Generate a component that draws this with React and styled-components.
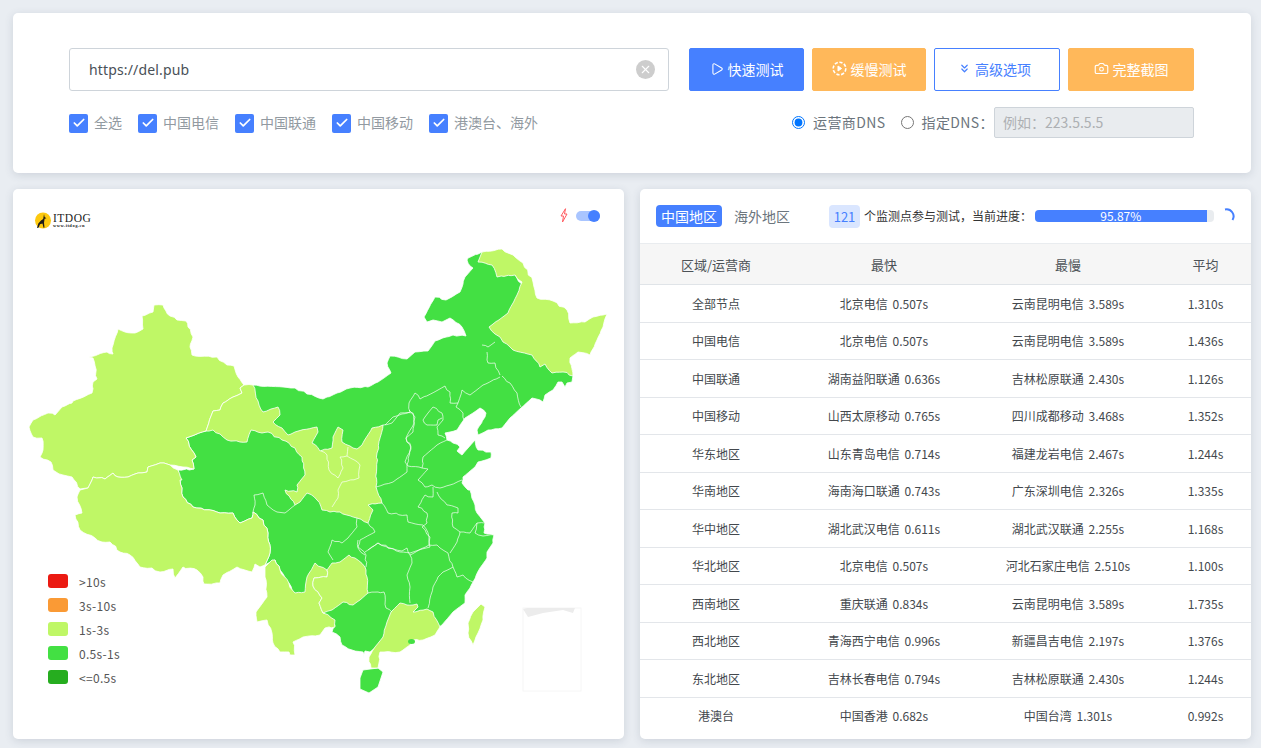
import React from "react";
import styled, { createGlobalStyle } from "styled-components";
import { Play, ChevronsDown, Camera, X, Check } from "lucide-react";

const GlobalStyle = createGlobalStyle`
  html, body {
    margin: 0;
    height: 100%;
    overflow: hidden;
    background: #e9edf2;
    font-family: "Noto Sans CJK SC", "Noto Sans", sans-serif;
  }
`;

const BLUE = "#4680ff";
const ORANGE = "#ffb85a";
const DARK = "#43e043";
const LIGHT = "#bff766";

const Page = styled.div`
  box-sizing: border-box;
  width: 1261px;
  height: 748px;
  padding: 13px 10px 9px 13px;
  display: flex;
  flex-direction: column;
  gap: 16px;
`;

const Card = styled.section`
  background: #fff;
  border-radius: 5px;
  box-shadow: 0 2px 9px rgba(60, 75, 100, 0.16);
`;

const SearchCard = styled(Card)`
  box-sizing: border-box;
  height: 160px;
  padding: 35px 57px 0 56px;
  display: flex;
  flex-direction: column;
  gap: 16px;
`;

const Row = styled.div`
  display: flex;
  align-items: center;
  justify-content: space-between;
`;

const UrlBox = styled.div`
  position: relative;
  width: 600px;
  height: 43px;
`;

const UrlInput = styled.input`
  box-sizing: border-box;
  width: 100%;
  height: 100%;
  padding: 0 40px 0 19px;
  border: 1px solid #ced4da;
  border-radius: 3px;
  outline: none;
  font: 14px "Noto Sans", "Noto Sans CJK SC", sans-serif;
  letter-spacing: 0.15px;
  color: #495057;
`;

const ClearIcon = styled.span`
  position: absolute;
  top: 12px;
  right: 14px;
  width: 19px;
  height: 19px;
  border-radius: 50%;
  background: #cdcdcd;
  color: #fff;
  display: flex;
  align-items: center;
  justify-content: center;
`;

const Buttons = styled.div`
  display: flex;
  gap: 8px;
`;

const Button = styled.button`
  box-sizing: border-box;
  width: ${(p) => p.$width}px;
  height: 43px;
  padding: 0 ${(p) => p.$shift || 0}px 2px 0;
  display: flex;
  align-items: center;
  justify-content: center;
  gap: ${(p) => p.$gap || 4}px;
  border-radius: 2px;
  border: 1px solid ${(p) => (p.$kind === "orange" ? ORANGE : BLUE)};
  background: ${(p) =>
    p.$kind === "orange" ? ORANGE : p.$kind === "outline" ? "#fff" : BLUE};
  color: ${(p) => (p.$kind === "outline" ? BLUE : "#fff")};
  font: 14px "Noto Sans CJK SC", sans-serif;
`;

const Checks = styled.div`
  display: flex;
  gap: 16px;
`;

const CheckItem = styled.label`
  display: flex;
  align-items: center;
  gap: 6px;
  font-size: 14px;
  color: #929aa1;
`;

const CheckLabel = styled.span`
  padding-bottom: 2px;
`;

const CheckBox = styled.span`
  width: 19px;
  height: 19px;
  margin-top: 1px;
  border-radius: 2px;
  background: ${BLUE};
  color: #fff;
  display: flex;
  align-items: center;
  justify-content: center;
`;

const DnsGroup = styled.div`
  display: flex;
  align-items: center;
  font-size: 14px;
  color: #6c757d;
`;

const RadioItem = styled.label`
  display: flex;
  align-items: center;
  gap: 8px;
  margin-right: ${(p) => p.$gap}px;
  letter-spacing: 0.4px;
`;

const RadioLabel = styled.span`
  padding-bottom: 1px;
`;

const Radio = styled.input`
  margin: 0;
  width: 13px;
  height: 13px;
`;

const DnsInput = styled.input`
  box-sizing: border-box;
  width: 200px;
  height: 31px;
  padding: 0 8px 1px;
  border: 1px solid #ced4da;
  border-radius: 2px;
  background: #e9ecef;
  font: 14px "Noto Sans CJK SC", sans-serif;
  &::placeholder {
    color: #adb0b3;
  }
`;

const Panels = styled.div`
  display: grid;
  grid-template-columns: 611px 611px;
  gap: 16px;
  flex: 1;
  min-height: 0;
`;

const MapCard = styled(Card)`
  position: relative;
  overflow: hidden;
`;

const MapCanvas = styled.svg`
  position: absolute;
  inset: 0;
`;

const MapHead = styled.div`
  position: relative;
  display: flex;
  justify-content: space-between;
  align-items: flex-start;
  padding: 19px 24px 0 21px;
`;

const Logo = styled.div`
  display: flex;
  align-items: center;
  gap: 1px;
  margin-top: 4px;
`;

const LogoText = styled.div`
  display: flex;
  flex-direction: column;
  font-family: "Liberation Serif", serif;
  color: #222;
`;

const LogoName = styled.span`
  font-size: 11.5px;
  line-height: 10px;
  letter-spacing: 0.5px;
`;

const LogoUrl = styled.span`
  font-size: 4.5px;
  line-height: 5px;
  letter-spacing: 0.5px;
  font-weight: 700;
`;

const Switch = styled.div`
  display: flex;
  align-items: center;
  gap: 8px;
`;

const Track = styled.div`
  position: relative;
  width: 24px;
  height: 10px;
  border-radius: 5px;
  background: #a9c5ff;
`;

const Thumb = styled.span`
  position: absolute;
  top: -1px;
  right: 0;
  width: 12px;
  height: 12px;
  border-radius: 50%;
  background: ${BLUE};
`;

const Legend = styled.ul`
  position: absolute;
  left: 35px;
  top: 382px;
  margin: 0;
  padding: 0;
  list-style: none;
  display: flex;
  flex-direction: column;
  gap: 4px;
`;

const LegendItem = styled.li`
  display: flex;
  align-items: center;
  gap: 11px;
  height: 20px;
  font-size: 12px;
  letter-spacing: 0.3px;
  color: #555;
`;

const Swatch = styled.span`
  width: 20px;
  height: 14px;
  border-radius: 3px;
  background: ${(p) => p.$color};
`;

const ResultCard = styled(Card)`
  overflow: hidden;
  display: flex;
  flex-direction: column;
`;

const ResultHead = styled.div`
  box-sizing: border-box;
  height: 54px;
  padding: 16px 16px 0;
  display: flex;
  align-items: flex-start;
`;

const Tab = styled.span`
  box-sizing: border-box;
  height: 22px;
  margin-right: 12px;
  border-radius: 4px;
  font-size: 14px;
  line-height: 22px;
  text-align: center;
  color: ${(p) => (p.$active ? "#fff" : "#6c757d")};
  background: ${(p) => (p.$active ? BLUE : "transparent")};
  width: ${(p) => (p.$active ? "66px" : "56px")};
`;

const Count = styled.span`
  width: 31px;
  height: 23px;
  margin: 0 4px 0 27px;
  border-radius: 4px;
  background: #dae6ff;
  color: ${BLUE};
  font-size: 13px;
  line-height: 23px;
  text-align: center;
`;

const CountText = styled.span`
  width: 171px;
  font-size: 12px;
  line-height: 22px;
  color: #333;
`;

const Progress = styled.div`
  width: 179px;
  height: 12px;
  margin-top: 5px;
  border-radius: 4px;
  background: #e9ecef;
`;

const ProgressBar = styled.div`
  height: 100%;
  border-radius: 4px 0 0 4px;
  background: ${BLUE};
  color: #fff;
  font-size: 12px;
  line-height: 12px;
  text-align: center;
`;

const Spinner = styled.svg`
  margin: 3px 0 0 9px;
`;

const Table = styled.table`
  width: 100%;
  border-collapse: collapse;
  table-layout: fixed;
`;

const HeadCell = styled.th`
  height: 40px;
  padding: 0;
  background: #f6f6f6;
  border-top: 1px solid #e9ecef;
  border-bottom: 1px solid #e0e4e8;
  font-size: 13px;
  font-weight: 400;
  color: #4c5257;
`;

const Cell = styled.td`
  height: 36.5px;
  padding: 0;
  border-bottom: 1px solid #e3e6ea;
  font-size: 12px;
  word-spacing: 2px;
  text-align: center;
  color: #43484d;
  tr:last-child > & {
    border-bottom: 0;
  }
`;

const CHECKS = ["全选", "中国电信", "中国联通", "中国移动", "港澳台、海外"];

const LEGEND = [
  ["#eb1a12", ">10s"],
  ["#fa9a35", "3s-10s"],
  [LIGHT, "1s-3s"],
  [DARK, "0.5s-1s"],
  ["#26ad1f", "<=0.5s"],
];

const ROWS = [
  ["全部节点", "北京电信 0.507s", "云南昆明电信 3.589s", "1.310s"],
  ["中国电信", "北京电信 0.507s", "云南昆明电信 3.589s", "1.436s"],
  ["中国联通", "湖南益阳联通 0.636s", "吉林松原联通 2.430s", "1.126s"],
  ["中国移动", "山西太原移动 0.765s", "四川成都移动 3.468s", "1.352s"],
  ["华东地区", "山东青岛电信 0.714s", "福建龙岩电信 2.467s", "1.244s"],
  ["华南地区", "海南海口联通 0.743s", "广东深圳电信 2.326s", "1.335s"],
  ["华中地区", "湖北武汉电信 0.611s", "湖北武汉联通 2.255s", "1.168s"],
  ["华北地区", "北京电信 0.507s", "河北石家庄电信 2.510s", "1.100s"],
  ["西南地区", "重庆联通 0.834s", "云南昆明电信 3.589s", "1.735s"],
  ["西北地区", "青海西宁电信 0.996s", "新疆昌吉电信 2.197s", "1.376s"],
  ["东北地区", "吉林长春电信 0.794s", "吉林松原联通 2.430s", "1.244s"],
  ["港澳台", "中国香港 0.682s", "中国台湾 1.301s", "0.992s"],
];

// the real borders are jagged: split each edge and nudge the new points.
// the nudge depends only on the position, so shared edges stay together
const roughen = (points) => {
  const pts = points.split(" ").map((p) => p.split(",").map(Number));
  const out = [];
  pts.forEach(([x, y], i) => {
    out.push(`${x},${y}`);
    const next = pts[i + 1];
    if (!next) return;
    const steps = Math.round(Math.hypot(next[0] - x, next[1] - y) / 4);
    for (let k = 1; k < steps; k++) {
      const px = x + ((next[0] - x) * k) / steps;
      const py = y + ((next[1] - y) * k) / steps;
      const seed = Math.sin(Math.round(px * 10) * 12.9898 + Math.round(py * 10) * 78.233) * 43758.5453;
      const n = seed - Math.floor(seed) - 0.5;
      out.push(`${(px + n * 1.6).toFixed(1)},${(py - n * 1.6).toFixed(1)}`);
    }
  });
  return out.join(" ");
};

// map outlines, in page pixels (the svg viewBox starts at the card corner)
const MAINLAND = roughen(
  "468,258 482,252 500,255 540,310 570,345 570,358 573,376 572,382 567,383 565,387 562,382 558,382 553,390 545,395 543,402 532,398 521,408 510,418 502,428 488,430 478,435 477,430 485,417 486,413 480,408 473,413 465,418 457,430 450,432 445,433 447,440 453,443 460,447 457,451 462,455 468,448 475,440 478,450 491,452 491,458 478,462 475,467 463,477 462,483 468,490 470,490 475,505 477,513 485,523 484,533 494,535 493,543 487,552 487,558 480,568 473,582 470,588 465,595 465,603 453,612 442,625 425,635 385,640 370,652 365,651 364,658 363,652 352,650 342,645 340,637 332,632 335,625 325,615 310,598 295,594 280,570 275,560 265,565 270,553 268,533 263,520 253,512 252,518 240,523 233,513 220,513 193,507 183,497 180,480 178,470 194,469 192,460 196,457 186,438 206,431 230,410 253,385 283,387 295,388 307,394 323,399 337,393 350,388 368,387 378,382 391,373 387,363 390,356 407,359 415,352 428,351 435,341 453,335 466,336 462,327 450,318 442,322 433,320 427,322 424,317 435,297 446,300 460,292 465,277 473,268 467,260"
);

const HAINAN = "363,670 378,668 383,672 378,687 369,693 360,689 360,678";

const LIGHT_AREAS = [
  // xinjiang
  "154,305 163,305 164,308 170,316 177,320 186,321 188,327 193,337 190,347 192,355 217,357 227,365 234,366 238,377 244,385 240,388 242,393 233,397 223,403 220,410 213,411 206,431 186,438 196,457 192,460 194,469 183,467 170,465 160,463 148,467 147,472 138,473 128,477 118,477 113,473 105,479 93,477 88,488 80,489 72,477 63,475 53,470 51,462 40,457 43,450 42,438 33,437 29,427 33,420 48,413 55,415 62,407 72,403 73,401 92,393 93,382 97,379 93,358 89,357 107,352 113,354 112,348 118,329 125,332 135,333 143,329 142,316 153,312",
  // tibet
  "88,488 93,477 105,479 113,473 118,477 128,477 138,473 147,472 148,467 160,463 170,465 178,470 182,480 180,480 183,497 193,507 220,513 233,513 240,523 252,518 253,512 263,520 268,533 270,553 265,565 260,567 255,564 252,572 237,567 223,575 220,583 204,584 203,577 197,570 183,567 175,578 173,569 160,572 152,568 140,567 130,555 120,552 110,542 102,542 80,530 75,515 82,513 77,497 80,490",
  // yunnan
  "265,567 272,560 275,560 280,570 295,593 305,592 307,577 315,563 327,570 327,577 314,578 313,586 322,598 319,603 323,613 335,620 335,627 325,628 320,635 303,637 293,642 295,655 290,655 289,652 280,652 273,643 272,633 267,620 257,622 256,612 267,597 265,577",
  // guizhou
  "332,563 340,562 349,555 355,558 365,567 367,577 368,593 360,600 353,605 343,602 332,610 323,613 319,603 322,598 313,586 314,578 327,577 327,570",
  // gansu, ningxia, shaanxi
  "244,385 253,385 258,401 263,412 278,407 280,415 273,422 282,428 288,435 295,432 317,427 318,432 312,443 320,451 332,448 333,437 338,427 343,430 342,442 350,446 357,449 362,445 372,428 383,425 377,453 376,487 382,503 368,505 373,510 368,523 357,518 340,512 330,512 322,510 317,500 307,493 300,502 295,505 285,490 297,492 297,485 305,475 302,457 295,448 282,440 268,432 262,433 251,430 247,442 240,442 227,440 220,434 213,430 206,431 213,411 220,410 223,403 233,397 242,393 240,388",
  // guangdong
  "391,612 400,603 407,605 417,604 418,607 413,612 427,609 433,612 440,627 435,635 423,640 413,640 410,645 400,652 380,652 378,668 371,668 369,657 375,647 383,637 387,622",
  // taiwan
  "481,604 485,607 483,620 478,633 475,640 473,645 468,633 468,623 473,612",
  // heilongjiang
  "482,252 502,249 513,255 523,263 533,282 537,298 553,301 567,310 570,323 585,322 593,317 607,314 603,327 597,340 590,355 578,352 570,358 573,376 563,372 552,373 545,364 540,367 532,355 513,350 503,342 500,337 495,334 489,327 508,313 517,295 522,282 515,275 497,277 492,265 478,262",
].map(roughen);

const BORDERS = [
  "321,451 327,455 329,470 338,478 343,468 340,457 347,456 360,465 359,478 342,482 338,490 338,498 332,507",
  "347,456 348,447",
  "253,512 255,505 254,495 263,493 267,505 277,512 285,513 295,505",
  "357,518 357,527 348,538 342,543 332,540 328,552 333,560",
  "368,523 375,532 360,540 358,547 366,555 366,567",
  "382,503 388,513 407,515 408,522 423,525 429,537 430,547 410,553 400,552 378,543 365,552",
  "376,487 393,482 407,472 407,465 411,447 406,438 414,423 413,413 400,413 392,423 383,425",
  "482,345 488,347 495,342",
  "487,352 488,363 495,363 500,375",
  "502,376 510,383 517,393 521,407",
  "500,377 483,385 470,395 462,390 458,403 450,403 450,392 445,386 438,390 420,399 415,393 409,403 410,412 393,417 385,425",
  "458,403 456,407 463,413 464,420",
  "409,410 415,417 413,432 406,438",
  "406,438 411,449 405,462 408,466 422,468 423,457 437,445 447,440",
  "423,420 428,413 433,407 442,413 443,420 437,427 438,435 445,438",
  "423,420 427,425 437,425 438,420 442,418",
  "422,468 428,469 418,480 425,487 432,485 440,488 450,485 462,480",
  "433,487 433,497 425,495 418,507 427,513 427,523 422,527 430,537 429,545",
  "437,492 447,505 448,505 458,508 458,513 452,513 453,527 460,532 457,542 450,553",
  "460,532 470,533 477,523 485,523",
  "477,523 475,533 483,536 494,535",
  "429,545 437,545 440,548 448,553 453,567 443,572 438,577 433,587 428,608",
  "410,555 423,548 429,545",
  "410,555 412,563 407,575 410,587 410,603",
  "453,567 457,577 463,575 473,582",
  "368,550 378,543 390,548 402,551 407,548 410,555",
  "358,540 358,548 365,555",
  "368,593 378,592 384,592 386,608 392,612",
].map(roughen);

const SlowIcon = () => (
  <svg width="15" height="15" viewBox="0 0 15 15" fill="none" stroke="currentColor">
    <circle cx="7.5" cy="7.5" r="6.3" strokeWidth="1.6" strokeDasharray="3.2 1.6" />
    <path d="M6 5l3.6 2.5L6 10z" fill="currentColor" strokeWidth="1" strokeLinejoin="round" />
  </svg>
);

const DogLogo = () => (
  <svg width="18" height="17" viewBox="0 0 18 17">
    <circle cx="9" cy="8.5" r="8" fill="#fdc90f" />
    <path
      d="M10 2l.6 3 1.8 1.2-1.8.6-.6 4 .5 4.8-1 .2-1-4.200-2.500.6-1.500 3.600-1.500.2 1.300-4.600 2.700-2.800 2.200-1.600z"
      fill="#1d1a16"
    />
  </svg>
);

const Bolt = () => (
  <svg width="8" height="15" viewBox="0 0 8 15" fill="none" stroke="#ff5a5f" strokeWidth="1" strokeLinejoin="round">
    <path d="M5.500 0.700L1 8h2.500L2.500 14 7 6H4.500z" />
  </svg>
);

const App = () => {
  return (
    <Page>
      <GlobalStyle />
      <SearchCard>
        <Row>
          <UrlBox>
            <UrlInput readOnly value="https://del.pub" />
            <ClearIcon>
              <X size={13} strokeWidth={2} />
            </ClearIcon>
          </UrlBox>
          <Buttons>
            <Button $width={115}>
              <Play size={14} strokeWidth={1.8} />
              快速测试
            </Button>
            <Button $width={114} $kind="orange">
              <SlowIcon />
              缓慢测试
            </Button>
            <Button $width={126} $kind="outline" $shift={5} $gap={4}>
              <ChevronsDown size={13} strokeWidth={2.2} />
              高级选项
            </Button>
            <Button $width={126} $kind="orange">
              <Camera size={15} strokeWidth={1.8} />
              完整截图
            </Button>
          </Buttons>
        </Row>
        <Row>
          <Checks>
            {CHECKS.map((label) => (
              <CheckItem key={label}>
                <CheckBox>
                  <Check size={14} strokeWidth={3} />
                </CheckBox>
                <CheckLabel>{label}</CheckLabel>
              </CheckItem>
            ))}
          </Checks>
          <DnsGroup>
            <RadioItem $gap={15}>
              <Radio type="radio" name="dns" defaultChecked />
              <RadioLabel>运营商DNS</RadioLabel>
            </RadioItem>
            <RadioItem $gap={0}>
              <Radio type="radio" name="dns" />
              <RadioLabel>指定DNS：</RadioLabel>
            </RadioItem>
            <DnsInput disabled placeholder="例如：223.5.5.5" />
          </DnsGroup>
        </Row>
      </SearchCard>
      <Panels>
        <MapCard>
          <MapCanvas width="611" height="550" viewBox="13 189 611 550">
            <rect x="523" y="608" width="58" height="83" fill="none" stroke="#f6f6f6" />
            <path d="M523 609l4-1h48l-2 5-10-3-20 3-15 4z" fill="#ececec" />
            <g stroke="#fff" strokeWidth="0.8" strokeLinejoin="round">
              <polygon points={MAINLAND} fill={DARK} />
              <polygon points={HAINAN} fill={DARK} />
              {LIGHT_AREAS.map((points) => (
                <polygon key={points} points={points} fill={LIGHT} />
              ))}
            </g>
            <ellipse cx="411.500" cy="641.500" rx="3.500" ry="2.500" fill={DARK} />
            <g fill="none" stroke="#fff" strokeWidth="0.8" strokeOpacity="0.85">
              {BORDERS.map((points) => (
                <polyline key={points} points={points} />
              ))}
            </g>
          </MapCanvas>
          <MapHead>
            <Logo>
              <DogLogo />
              <LogoText>
                <LogoName>ITDOG</LogoName>
                <LogoUrl>www.itdog.cn</LogoUrl>
              </LogoText>
            </Logo>
            <Switch>
              <Bolt />
              <Track>
                <Thumb />
              </Track>
            </Switch>
          </MapHead>
          <Legend>
            {LEGEND.map(([color, label]) => (
              <LegendItem key={label}>
                <Swatch $color={color} />
                {label}
              </LegendItem>
            ))}
          </Legend>
        </MapCard>
        <ResultCard>
          <ResultHead>
            <Tab $active>中国地区</Tab>
            <Tab>海外地区</Tab>
            <Count>121</Count>
            <CountText>个监测点参与测试，当前进度：</CountText>
            <Progress>
              <ProgressBar style={{ width: "95.87%" }}>95.87%</ProgressBar>
            </Progress>
            <Spinner width="12" height="14" viewBox="0 0 12 14" fill="none">
              <path d="M2 1.500A7 7 0 0 1 9.500 12" stroke={BLUE} strokeWidth="2" />
            </Spinner>
          </ResultHead>
          <Table>
            <colgroup>
              <col width="152" />
              <col width="184" />
              <col width="184" />
              <col width="91" />
            </colgroup>
            <thead>
              <tr>
                <HeadCell>区域/运营商</HeadCell>
                <HeadCell>最快</HeadCell>
                <HeadCell>最慢</HeadCell>
                <HeadCell>平均</HeadCell>
              </tr>
            </thead>
            <tbody>
              {ROWS.map((row) => (
                <tr key={row[0]}>
                  {row.map((text) => (
                    <Cell key={text}>{text}</Cell>
                  ))}
                </tr>
              ))}
            </tbody>
          </Table>
        </ResultCard>
      </Panels>
    </Page>
  );
};

export default App;
